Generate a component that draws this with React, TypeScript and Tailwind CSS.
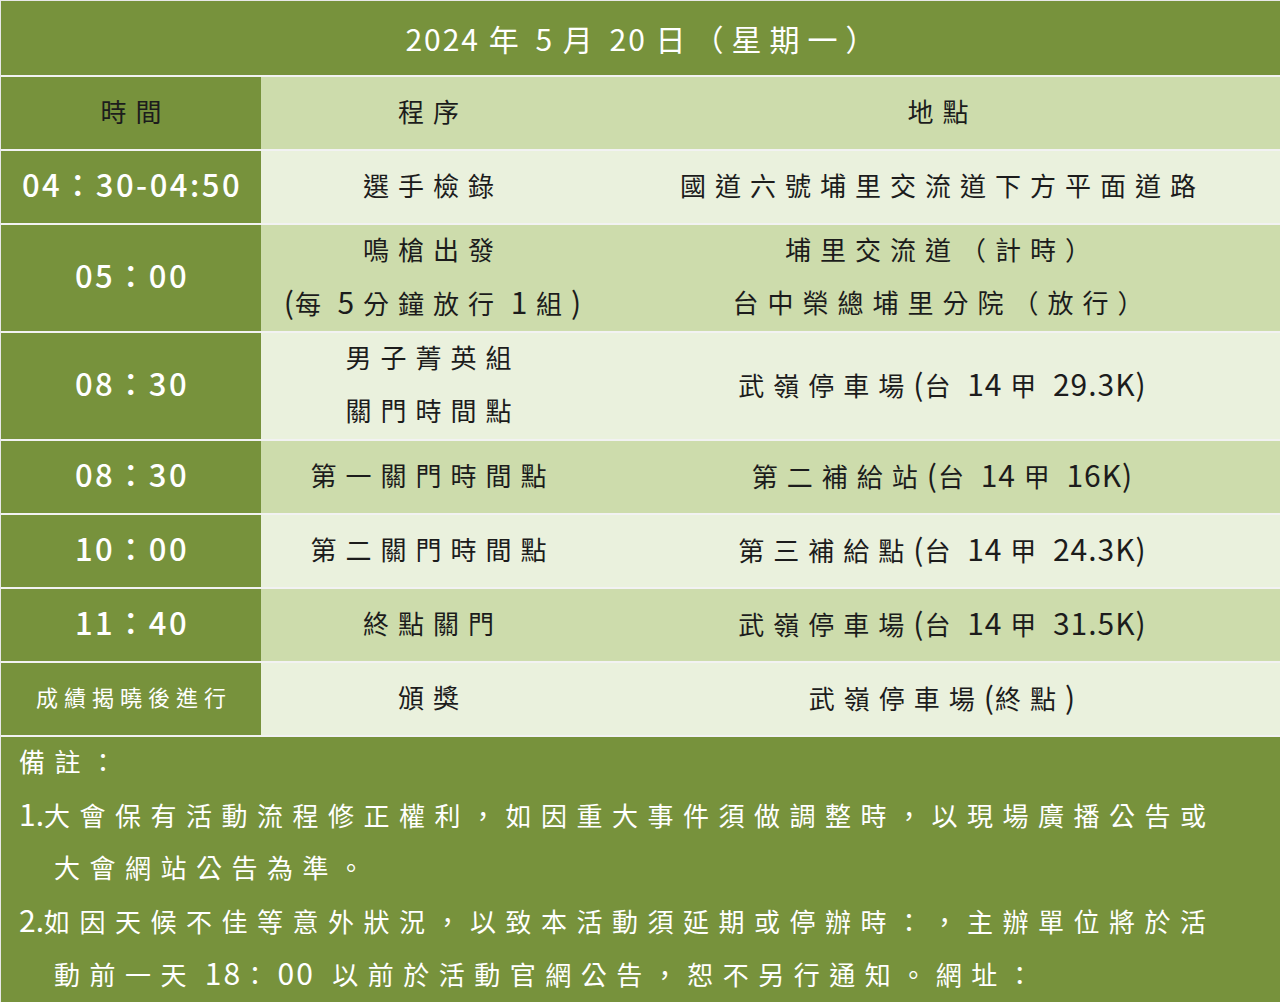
import React from 'react';

interface Row {
  time: string;
  prog: string[];
  loc: string[];
  tall?: boolean;
  light: boolean;
  smallTime?: boolean;
}

const rows: Row[] = [
  { time: '04：30-04:50', prog: ['選手檢錄'], loc: ['國道六號埔里交流道下方平面道路'], light: true },
  { time: '05：00', prog: ['鳴槍出發', '(每 5 分鐘放行 1 組)'], loc: ['埔里交流道（計時）', '台中榮總埔里分院（放行）'], tall: true, light: false },
  { time: '08：30', prog: ['男子菁英組', '關門時間點'], loc: ['武嶺停車場(台 14 甲 29.3K)'], tall: true, light: true },
  { time: '08：30', prog: ['第一關門時間點'], loc: ['第二補給站(台 14 甲 16K)'], light: false },
  { time: '10：00', prog: ['第二關門時間點'], loc: ['第三補給點(台 14 甲 24.3K)'], light: true },
  { time: '11：40', prog: ['終點關門'], loc: ['武嶺停車場(台 14 甲 31.5K)'], light: false },
  { time: '成績揭曉後進行', prog: ['頒獎'], loc: ['武嶺停車場(終點)'], light: true, smallTime: true },
];

const font = { fontFamily: '"Noto Sans CJK TC", "Noto Sans", sans-serif' };

// East Asian characters get the wide character spacing, Latin runs stay tight
const Spaced: React.FC<{ text: string; cjk: string; latin?: string }> = ({ text, cjk, latin = '' }) => {
  const parts = text.split(/([\u3000-\u9fff\uff00-\uffef]+)/).filter(Boolean);
  return (
    <span className="whitespace-pre">
      {parts.map((p, i) =>
        /[\u3000-\u9fff\uff00-\uffef]/.test(p) ? (
          <span key={i} className={cjk}>{p}</span>
        ) : (
          <span key={i} className={latin}>{p}</span>
        )
      )}
    </span>
  );
};

const Lines: React.FC<{ lines: string[] }> = ({ lines }) => (
  <div className="flex flex-col items-center">
    {lines.map((l, i) => (
      <span key={i} className="h-[53px] leading-[53px] whitespace-nowrap pl-[9px]">
        <Spaced text={l} cjk="tracking-[9px]" latin="text-[30px] tracking-[1px]" />
      </span>
    ))}
  </div>
);

const note = 'h-[53px] leading-[47px]';

export default function App() {
  return (
    <div className="w-[1280px] h-[1002px] overflow-hidden bg-[#f2f2f2]" style={font}>
      <div className="flex flex-col gap-[2px] border-l border-t border-[#e8e8e8]">
        <div className="h-[74px] bg-[#77923c] flex items-center justify-center text-white text-[30px] pl-[8px]">
          <Spaced text="2024 年 5 月 20 日（星期一）" cjk="tracking-[8px]" latin="tracking-[2px]" />
        </div>

        <div className="h-[72px] flex text-[26px] tracking-[9px] text-[#1c1c1c]">
          <div className="w-[260px] bg-[#77923c] flex items-center justify-center pl-[9px] pb-[6px]">時間</div>
          <div className="w-[335px] bg-[#cddcac] flex items-center justify-center pl-[9px] pb-[6px]">程序</div>
          <div className="flex-1 bg-[#cddcac] flex items-center justify-center pl-[9px] pb-[6px]">地點</div>
        </div>

        {rows.map((r, i) => (
          <div key={i} className={`${r.tall ? 'h-[106px]' : 'h-[72px]'} flex text-[26px] text-[#1c1c1c]`}>
            <div className="w-[260px] bg-[#77923c] flex items-center justify-center text-white pb-[6px]">
              {r.smallTime ? (
                <span className="text-[22px] tracking-[6px] pl-[6px]">{r.time}</span>
              ) : (
                <span className="text-[31px] font-medium tracking-[2.5px] pl-[2px]">{r.time}</span>
              )}
            </div>
            <div className={`w-[335px] ${r.light ? 'bg-[#eaf1dd]' : 'bg-[#cddcac]'} flex items-center justify-center pb-[6px]`}>
              <Lines lines={r.prog} />
            </div>
            <div className={`flex-1 ${r.light ? 'bg-[#eaf1dd]' : 'bg-[#cddcac]'} flex items-center justify-center pb-[6px]`}>
              <Lines lines={r.loc} />
            </div>
          </div>
        ))}

        <div className="bg-[#77923c] text-white text-[26px] pl-[18px] pb-[20px] whitespace-nowrap">
          <p className={note}><Spaced text="備註：" cjk="tracking-[9.5px]" /></p>
          <p className={note}><Spaced text="1.大會保有活動流程修正權利，如因重大事件須做調整時，以現場廣播公告或" cjk="tracking-[9.5px]" latin="text-[30px]" /></p>
          <p className={`${note} pl-[35px]`}><Spaced text="大會網站公告為準。" cjk="tracking-[9.5px]" /></p>
          <p className={note}><Spaced text="2.如因天候不佳等意外狀況，以致本活動須延期或停辦時：，主辦單位將於活" cjk="tracking-[9.5px]" latin="text-[30px]" /></p>
          <p className={`${note} pl-[35px]`}><Spaced text="動前一天 18：00  以前於活動官網公告，恕不另行通知。網址：" cjk="tracking-[9.5px]" latin="text-[30px] tracking-[2px]" /></p>
        </div>
      </div>
    </div>
  );
}
